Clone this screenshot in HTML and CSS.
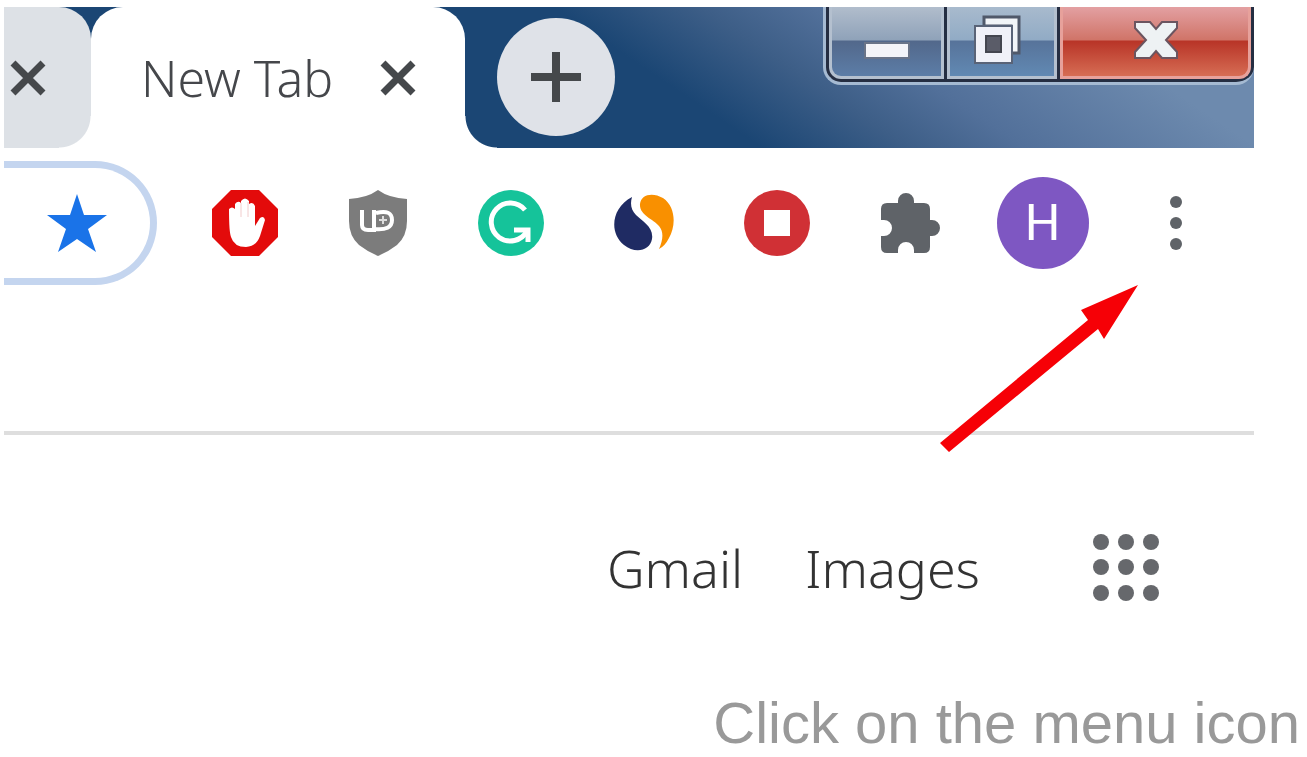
FILE: index.html
```html
<!DOCTYPE html>
<html lang="en">
<head>
    <meta charset="UTF-8">
    <meta name="viewport" content="width=device-width, initial-scale=1.0">
    <title>Click on the menu icon</title>
    <link rel="stylesheet" href="styles.css">
</head>
<body>
    <figure class="step">
        <div class="browser">
            <div class="tab-strip">
                <div class="tab tab-inactive">
                    <button class="tab-close" aria-label="Close tab">
                        <svg width="36" height="36" viewBox="0 0 36 36"><path d="M3 3L33 33M33 3L3 33"/></svg>
                    </button>
                </div>
                <div class="tab tab-active">
                    <span class="tab-title">New Tab</span>
                    <button class="tab-close" aria-label="Close tab">
                        <svg width="36" height="36" viewBox="0 0 36 36"><path d="M3 3L33 33M33 3L3 33"/></svg>
                    </button>
                </div>
                <button class="new-tab" aria-label="New tab">
                    <svg width="50" height="50" viewBox="0 0 50 50"><path d="M25 0V50M0 25H50"/></svg>
                </button>
                <div class="window-controls">
                    <button class="win-btn win-min" aria-label="Minimize">
                        <svg width="48" height="20" viewBox="0 0 48 20"><rect x="2" y="2" width="44" height="15" fill="#f4f4f8" stroke="#6a7488" stroke-width="2"/></svg>
                    </button>
                    <button class="win-btn win-max" aria-label="Restore">
                        <svg width="58" height="50" viewBox="0 0 58 50">
                            <path d="M11 9V2H46V38H38V11H11Z" fill="#f2f5f8" stroke="#50596a" stroke-width="3"/>
                            <rect x="2" y="11" width="37" height="37" fill="#f0f1f8" stroke="#596377" stroke-width="2"/>
                            <rect x="13" y="21" width="15" height="16" fill="#5a5c68" stroke="#44464f" stroke-width="2"/>
                        </svg>
                    </button>
                    <button class="win-btn win-close" aria-label="Close">
                        <svg width="46" height="40" viewBox="0 0 46 40"><path d="M2 2H17L23 9L29 2H44V8L33 20L44 32V38H29L23 31L17 38H2V32L13 20L2 8Z" fill="#eef2f4" stroke="#6b5560" stroke-width="2"/></svg>
                    </button>
                </div>
            </div>

            <div class="toolbar">
                <div class="omnibox">
                    <button class="icon-btn" aria-label="Bookmark this tab">
                        <svg width="60" height="58" viewBox="0 0 60 58"><path d="M30 0L37 21H60L41 35L49 58L30 45L11 58L19 35L0 21H23Z" fill="#1a73e8"/></svg>
                    </button>
                </div>
                <div class="extensions">
                    <button class="icon-btn" aria-label="AdBlock">
                        <svg width="68" height="68" viewBox="0 0 68 68">
                            <path d="M20 1H48L67 20V48L48 67H20L1 48V20Z" fill="#e30b0b"/>
                            <path d="M18 20Q21 17 24 20V15Q27 11 30 14V12Q34 7 38 12V15Q42 12 44 17V37L49 29Q53 26 54 31L49 47Q45 58 35 58Q23 58 20 48Q18 43 18 20Z" fill="#fff"/>
                            <path d="M30 14V28M37 13V28" stroke="#f1cccc" stroke-width="1"/>
                        </svg>
                    </button>
                    <button class="icon-btn" aria-label="uBlock Origin">
                        <svg width="60" height="68" viewBox="0 0 60 68">
                            <path d="M30 1Q41 9 59 10V32Q59 47 49 56Q40 63 30 67Q20 63 11 56Q1 47 1 32V10Q19 9 30 1Z" fill="#7c7c7c"/>
                            <path d="M14 21V36Q14 41 20 41H26V21" fill="none" stroke="#fff" stroke-width="4"/>
                            <path d="M28 24Q44 20 44 31Q44 42 26 40" fill="none" stroke="#fff" stroke-width="4"/>
                            <path d="M35 27V35M31 31H39" stroke="#ddd" stroke-width="2"/>
                        </svg>
                    </button>
                    <button class="icon-btn" aria-label="Grammarly">
                        <svg width="68" height="68" viewBox="0 0 68 68">
                            <circle cx="34" cy="34" r="33" fill="#15c39a"/>
                            <path d="M48 21A19 19 0 1 0 50 42" fill="none" stroke="#fff" stroke-width="5"/>
                            <path d="M37 41H51V53" fill="none" stroke="#fff" stroke-width="5"/>
                        </svg>
                    </button>
                    <button class="icon-btn" aria-label="Similarweb">
                        <svg width="60" height="60" viewBox="0 0 60 60">
                            <path d="M18 4C-3 15-5 40 10 52C21 61 36 58 38 46C40 34 28 28 22 22C17 17 16 11 18 4Z" fill="#1f2b63"/>
                            <path d="M26 11C27 1 39-1 49 5C62 14 62 33 55 45Q51 53 45 56C49 47 50 39 45 33C39 26 25 22 26 11Z" fill="#f99000"/>
                        </svg>
                    </button>
                    <button class="icon-btn" aria-label="Screen recorder">
                        <svg width="68" height="68" viewBox="0 0 68 68">
                            <circle cx="34" cy="34" r="33" fill="#d03035"/>
                            <rect x="21" y="21" width="26" height="26" fill="#fff"/>
                        </svg>
                    </button>
                    <button class="icon-btn" aria-label="Extensions">
                        <svg width="62" height="62" viewBox="0 0 62 62"><path d="M8 11H19V9A8 8 0 0 1 35 9V11H45Q51 11 51 17V28H53A8 8 0 0 1 53 44H51V55Q51 61 45 61H35V58A8 8 0 0 0 19 58V61H8Q2 61 2 55V44H5A8 8 0 0 0 5 28H2V17Q2 11 8 11Z" fill="#5f6368"/></svg>
                    </button>
                    <button class="icon-btn avatar" aria-label="Profile">H</button>
                    <button class="icon-btn" aria-label="Menu">
                        <svg width="14" height="56" viewBox="0 0 14 56" fill="#5f6368">
                            <circle cx="7" cy="7" r="6"/>
                            <circle cx="7" cy="28" r="6"/>
                            <circle cx="7" cy="49" r="6"/>
                        </svg>
                    </button>
                </div>
            </div>

            <div class="bookmarks-bar"></div>

            <nav class="page-nav">
                <a href="#">Gmail</a>
                <a href="#">Images</a>
                <button class="icon-btn" aria-label="Google apps">
                    <svg width="68" height="68" viewBox="0 0 68 68" fill="#66686c">
                        <circle cx="9" cy="9" r="8"/><circle cx="34" cy="9" r="8"/><circle cx="59" cy="9" r="8"/>
                        <circle cx="9" cy="34" r="8"/><circle cx="34" cy="34" r="8"/><circle cx="59" cy="34" r="8"/>
                        <circle cx="9" cy="60" r="8"/><circle cx="34" cy="60" r="8"/><circle cx="59" cy="60" r="8"/>
                    </svg>
                </button>
            </nav>

            <!-- arrow pointing at the menu button -->
            <svg class="arrow" width="200" height="170" viewBox="0 0 200 170">
                <path d="M199 1L165 55L159 45L10 168L1 159L149 36L142 26Z" fill="#f60006"/>
            </svg>
        </div>
        <figcaption>Click on the menu icon</figcaption>
    </figure>
</body>
</html>
```
FILE: styles.css
```css
* {
    margin: 0;
    padding: 0;
    box-sizing: border-box;
}

body {
    font-family: 'Noto Sans', 'Open Sans', sans-serif;
    background: #fff;
}

button {
    border: none;
    background: none;
    font-family: inherit;
    cursor: pointer;
}

svg {
    display: block;
}

.step {
    padding-top: 7px;
}

.browser {
    position: relative;
    margin: 0 53px 0 4px;
}

/* tabs */
.tab-strip {
    display: flex;
    height: 141px;
    background: linear-gradient(34deg, #1b4674 52%, #3d5e87 62%, #52709a 70%, #6d8aae 86%);
    overflow: hidden;
}

.tab {
    display: flex;
    align-items: center;
}

.tab-inactive {
    width: 87px;
    padding-left: 6px;
    background: #dde1e6;
    border-radius: 0 32px 0 0;
}

.tab-active {
    position: relative;
    width: 374px;
    padding-left: 50px;
    gap: 47px;
    background: #fff;
    border-radius: 32px 32px 0 0;
}

/* curved feet of the active tab */
.tab-active::before,
.tab-active::after {
    content: '';
    position: absolute;
    bottom: 0;
    width: 32px;
    height: 32px;
}

.tab-active::before {
    right: 100%;
    background: radial-gradient(circle at 0 0, transparent 31px, #fff 32px);
}

.tab-active::after {
    left: 100%;
    background: radial-gradient(circle at 100% 0, transparent 31px, #fff 32px);
}

.tab-title {
    color: #45474b;
    font-size: 50px;
    font-weight: 300;
    line-height: 60px;
    white-space: nowrap;
}

.tab-close path {
    fill: none;
    stroke: #45484b;
    stroke-width: 7;
}

.new-tab {
    display: flex;
    align-items: center;
    justify-content: center;
    width: 118px;
    height: 118px;
    margin: 11px 0 0 32px;
    border-radius: 50%;
    background: #dfe2e8;
}

.new-tab path {
    stroke: #45484b;
    stroke-width: 8;
}

/* window buttons */
.window-controls {
    display: flex;
    width: 431px;
    height: 78px;
    margin-left: auto;
    border: 3px solid #a5bad2;
    border-top: none;
    border-right: none;
    border-radius: 0 0 18px 18px;
    background: #252e42;
    padding: 0 3px 3px;
    gap: 3px;
}

.win-btn {
    display: flex;
    align-items: flex-start;
    justify-content: center;
    border: 3px solid #b4c0cf;
    border-top: none;
    background: linear-gradient(#b1bdcc, #8fa2b9 33px, #52688b 34px, #5c7da7);
}

.win-min {
    width: 115px;
    padding-top: 34px;
    border-radius: 0 0 0 12px;
}

.win-max {
    width: 110px;
    padding-top: 8px;
    background: linear-gradient(#a8bacd, #91abc5 33px, #57739a 34px, #6189b3);
}

.win-close {
    flex: 1;
    padding-top: 13px;
    border-color: #e7a19b;
    border-radius: 0 0 12px 0;
    background: linear-gradient(#e3a0a2, #d07468 33px, #b83427 34px, #d66d54);
}

/* toolbar */
.toolbar {
    display: flex;
    align-items: center;
    height: 150px;
    padding-right: 12px;
}

.omnibox {
    display: flex;
    align-items: center;
    justify-content: flex-end;
    width: 153px;
    height: 124px;
    padding-right: 43px;
    border: 7px solid #c4d5ef;
    border-left: none;
    border-radius: 0 62px 62px 0;
}

.extensions {
    display: flex;
    flex: 1;
    align-items: center;
    justify-content: space-around;
    padding-left: 21px;
}

.icon-btn {
    display: flex;
    flex: none;
    align-items: center;
    justify-content: center;
}

.extensions .icon-btn {
    width: 92px;
    height: 92px;
}

.extensions .avatar {
    border-radius: 50%;
    background: #7e57c2;
    color: #fff;
    font-family: Roboto, sans-serif;
    font-size: 50px;
}

.bookmarks-bar {
    height: 137px;
    border-bottom: 4px solid #dedede;
}

/* new tab page links */
.page-nav {
    display: flex;
    justify-content: flex-end;
    align-items: flex-end;
    height: 166px;
    padding-right: 94px;
}

.page-nav a {
    margin-right: 62px;
    color: #333;
    font-size: 52px;
    font-weight: 300;
    line-height: 66px;
    text-decoration: none;
}

.page-nav .icon-btn {
    margin-left: 50px;
}

.arrow {
    position: absolute;
    top: 277px;
    right: 115px;
}

figcaption {
    padding: 88px 7px 0 0;
    color: #999;
    font-family: 'Liberation Sans', Arial, sans-serif;
    font-size: 58px;
    line-height: 68px;
    text-align: right;
}
```
